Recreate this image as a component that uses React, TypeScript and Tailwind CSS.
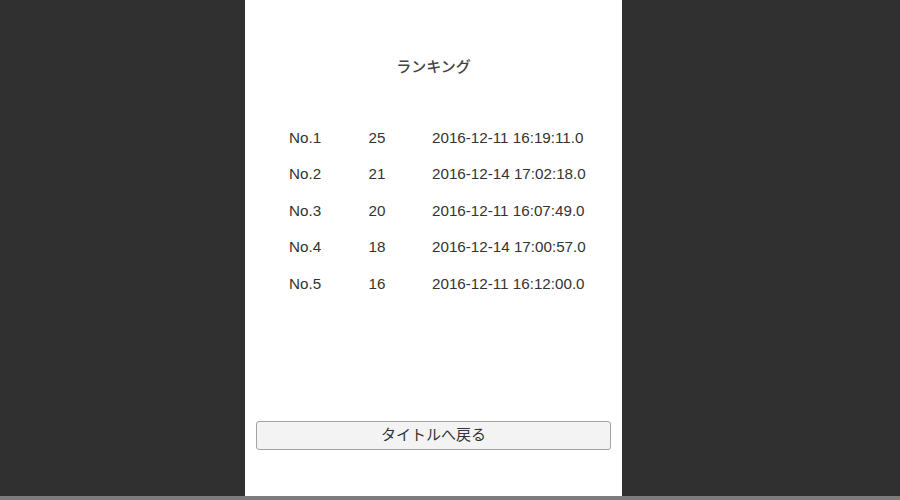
import React from 'react';

const rows = [
  { rank: 'No.1', score: '25', date: '2016-12-11 16:19:11.0' },
  { rank: 'No.2', score: '21', date: '2016-12-14 17:02:18.0' },
  { rank: 'No.3', score: '20', date: '2016-12-11 16:07:49.0' },
  { rank: 'No.4', score: '18', date: '2016-12-14 17:00:57.0' },
  { rank: 'No.5', score: '16', date: '2016-12-11 16:12:00.0' },
];

const App = () => {
  return (
    <div
      className="w-[900px] h-[500px] bg-[#303030] flex flex-col overflow-hidden"
      style={{ fontFamily: '"Liberation Sans", "Noto Sans CJK JP", sans-serif' }}
    >
      <div className="flex-1 flex">
        {/* Ranking panel */}
        <div className="ml-[245px] w-[377px] h-full bg-white flex flex-col">
          <h1 className="mt-[58px] h-[18px] text-center text-[15px] leading-[18px] text-[#444] font-medium">
            ランキング
          </h1>

          <div className="mt-[44px] flex flex-col">
            {rows.map((r) => (
              <div key={r.rank} className="h-[36.5px] flex items-center text-[15.2px] text-[#333]">
                <div className="ml-[44px] w-[60px]">{r.rank}</div>
                <div className="w-[56px] text-center">{r.score}</div>
                <div className="ml-[27px]">{r.date}</div>
              </div>
            ))}
          </div>

          <div className="flex-1" />

          <button className="mx-[11px] mb-[46px] h-[29px] rounded-[3px] border border-[#a3a3a3] bg-[#f3f3f3] text-[15px] text-[#333]">
            タイトルへ戻る
          </button>
        </div>
      </div>
      <div className="h-[4px] bg-[#7c7c7c]" />
    </div>
  );
};

export default App;
